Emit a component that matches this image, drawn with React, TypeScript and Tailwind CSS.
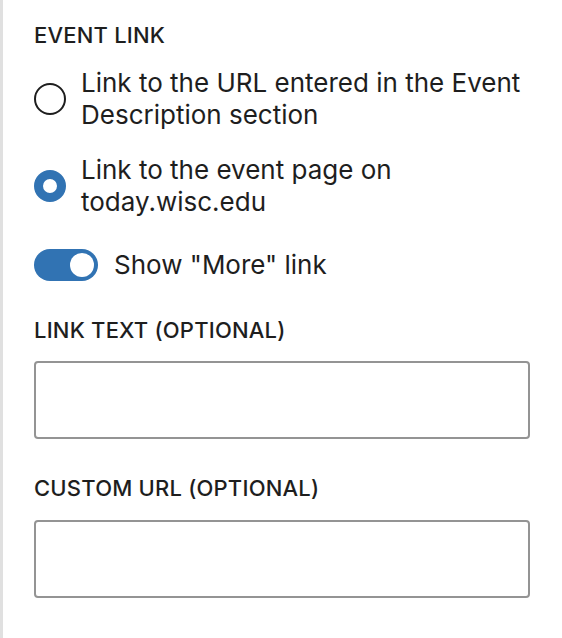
import React from "react";

export default function App() {
  return (
    <div
      className="w-[562px] h-[638px] bg-white border-l-[3px] border-[#e0e0e0] pl-[31px] pr-[32px] pt-[19px] text-[#1e1e1e]"
      style={{ fontFamily: "Inter, 'Noto Sans', sans-serif" }}
    >
      <div className="h-[32px] leading-[32px] text-[22px] font-medium uppercase tracking-[0.2px]">Event link</div>

      <div className="mt-[16px] flex flex-col gap-[24px]">
        <label className="flex items-center gap-[15px]">
          <span className="w-[32px] h-[32px] shrink-0 rounded-full border-2 border-[#1e1e1e] bg-white" />
          <span className="text-[26px] leading-[31.5px] max-w-[440px]">
            Link to the URL entered in the Event Description section
          </span>
        </label>
        <label className="flex items-center gap-[15px]">
          <span className="w-[32px] h-[32px] shrink-0 rounded-full border-[9px] border-[#3173b3] bg-white" />
          <span className="text-[26px] leading-[31.5px] max-w-[440px]">
            Link to the event page on today.wisc.edu
          </span>
        </label>
      </div>

      <div className="mt-[32px] flex items-center gap-[16px] h-[32px]">
        <span className="w-[64px] h-[32px] shrink-0 rounded-full bg-[#3173b3] flex items-center justify-end pr-[4px]">
          <span className="w-[24px] h-[24px] rounded-full bg-white" />
        </span>
        <span className="text-[26px] leading-[32px]">Show "More" link</span>
      </div>

      <div className="mt-[33px] h-[32px] leading-[32px] text-[22px] font-medium uppercase tracking-[0.2px]">Link text (optional)</div>
      <div className="mt-[15px] h-[78px] w-[496px] rounded-[4px] border-2 border-[#949494] bg-white" />

      <div className="mt-[33px] h-[32px] leading-[32px] text-[22px] font-medium uppercase tracking-[0.2px]">Custom URL (optional)</div>
      <div className="mt-[16px] h-[78px] w-[496px] rounded-[4px] border-2 border-[#949494] bg-white" />
    </div>
  );
}
